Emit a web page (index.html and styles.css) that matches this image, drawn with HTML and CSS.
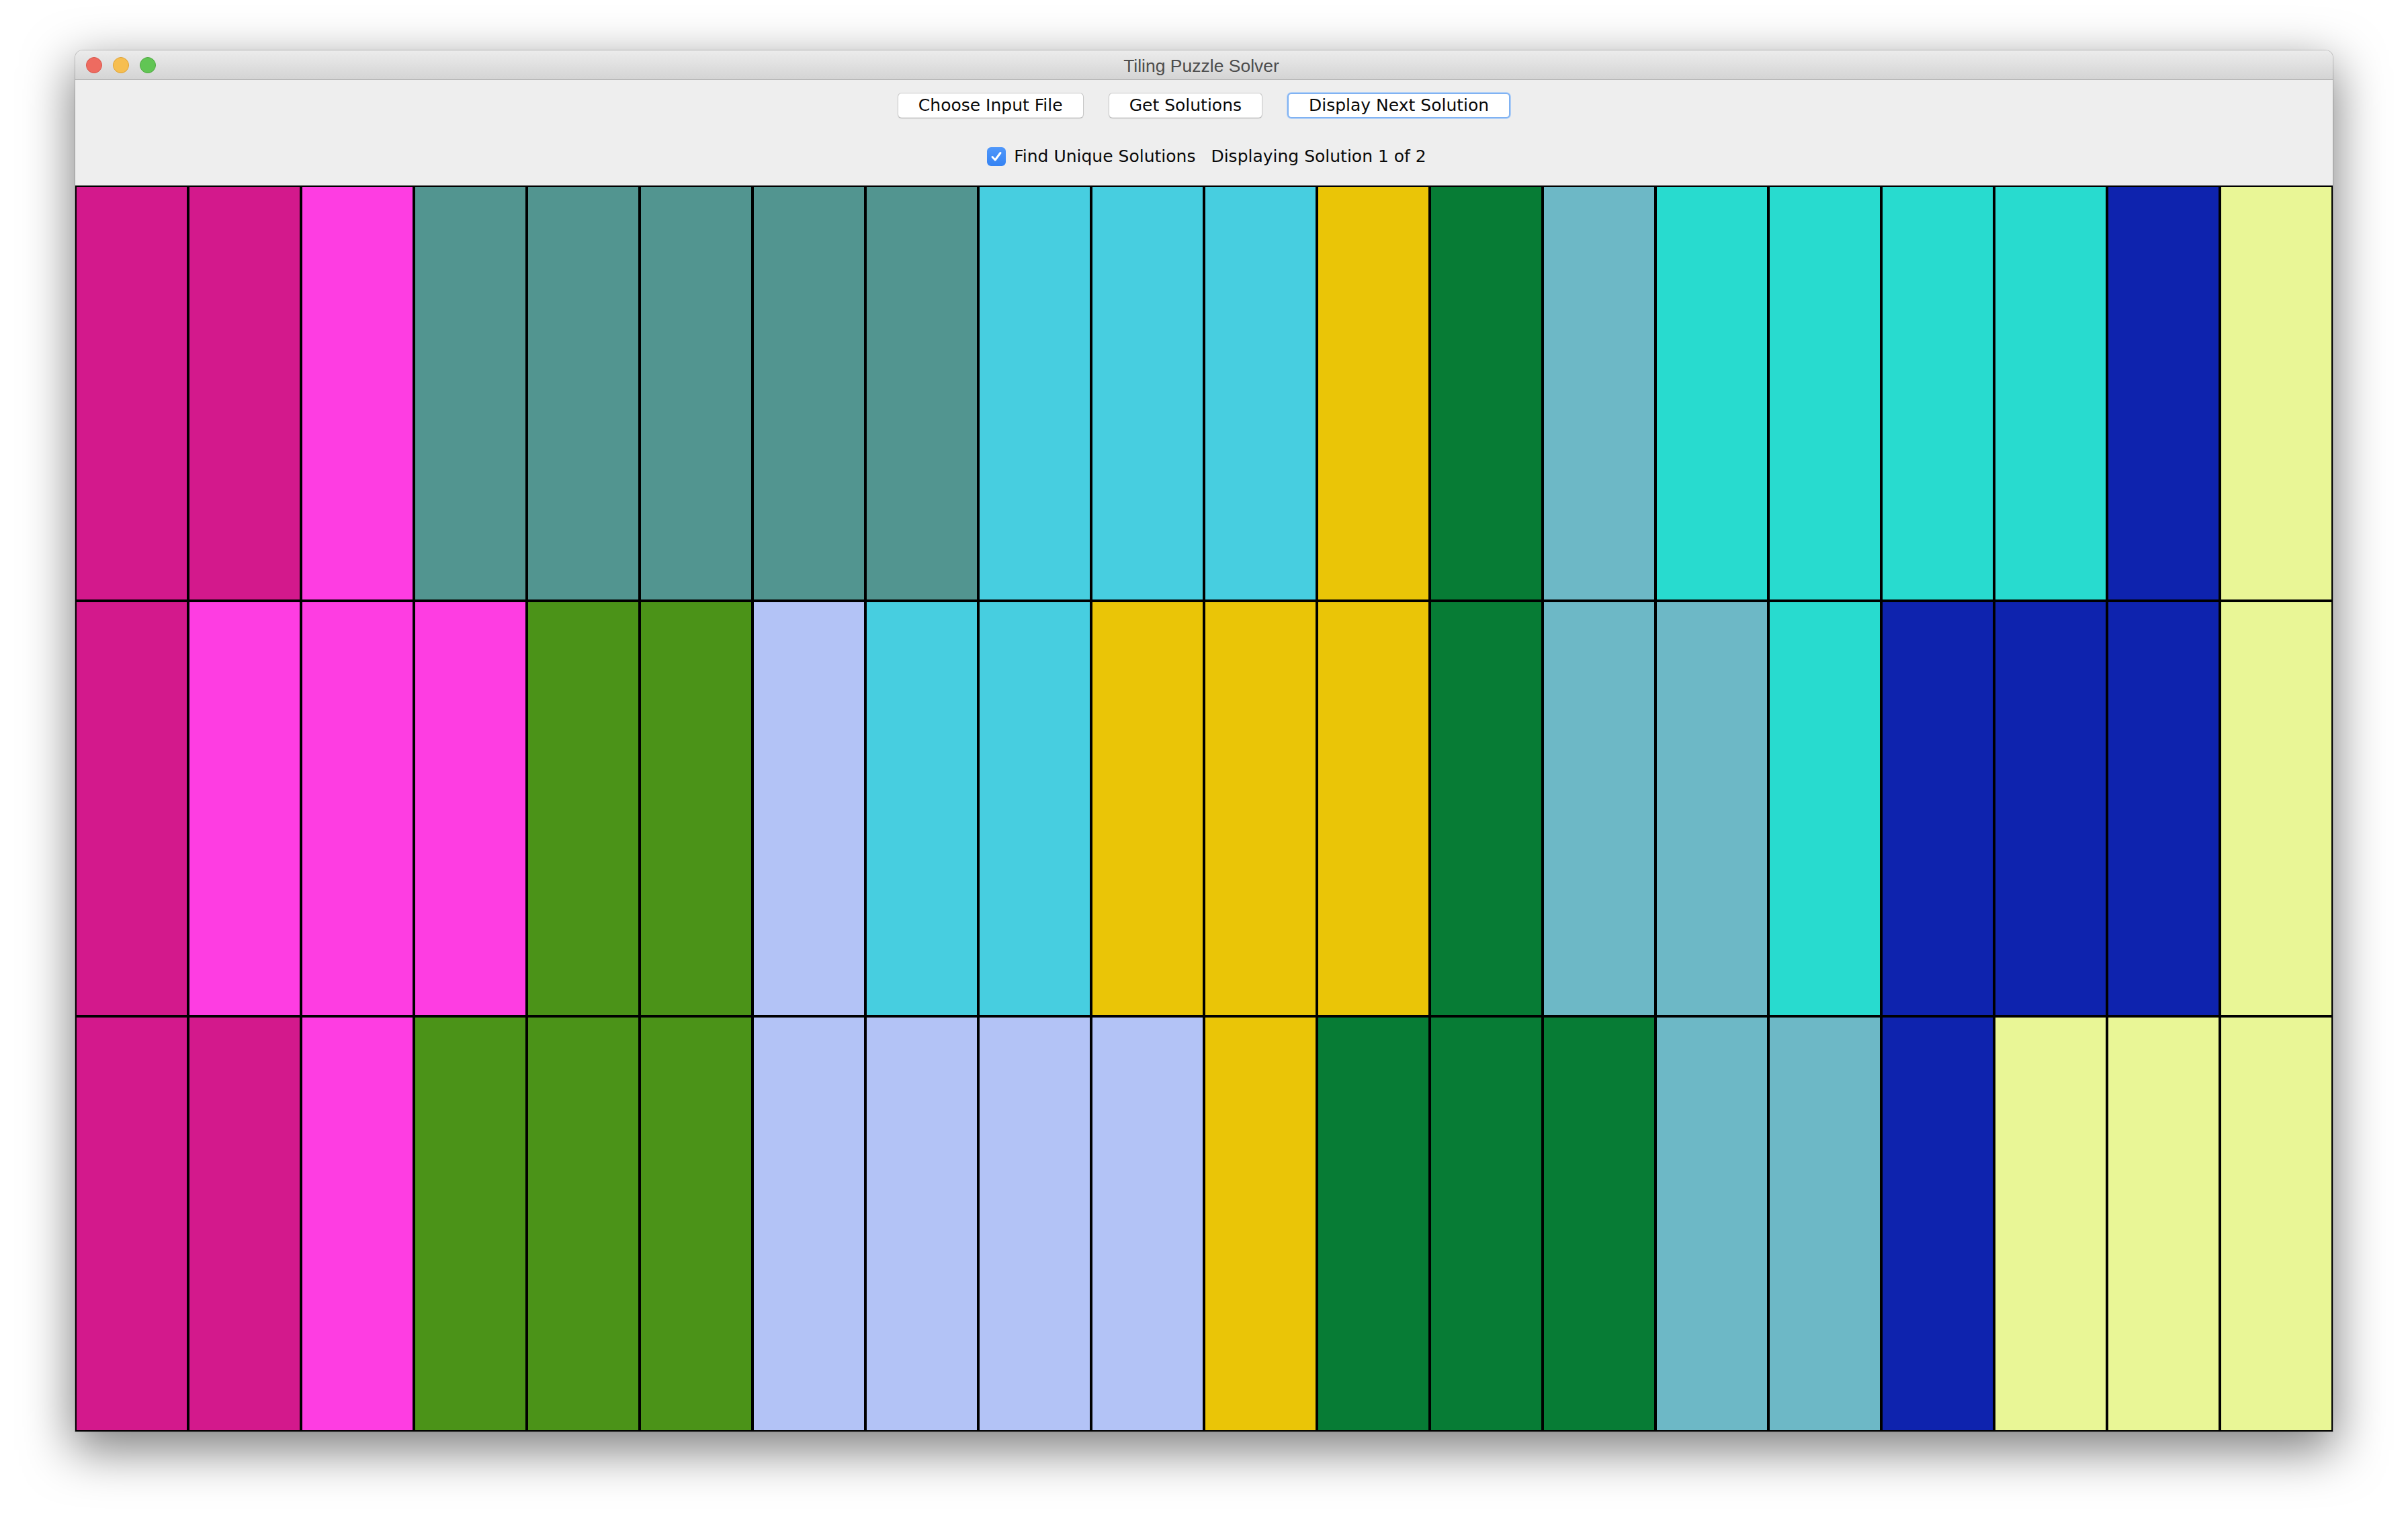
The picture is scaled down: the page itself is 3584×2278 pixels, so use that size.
FILE: index.html
```html
<!DOCTYPE html>
<html lang="en">
<head>
<meta charset="utf-8">
<title>Tiling Puzzle Solver</title>
<link rel="stylesheet" href="styles.css">
</head>
<body>
<div class="window">
  <div class="titlebar">
    <div class="lights">
      <span class="light red"></span>
      <span class="light yellow"></span>
      <span class="light green"></span>
    </div>
    <div class="title">Tiling Puzzle Solver</div>
  </div>
  <div class="controls">
    <div class="buttons">
      <button class="btn">Choose Input File</button>
      <button class="btn">Get Solutions</button>
      <button class="btn focused">Display Next Solution</button>
    </div>
    <div class="options">
      <label class="check">
        <span class="box"><svg viewBox="0 0 28 28" width="28" height="28"><path d="M8 14.5 L12.2 19 L20 8.5" fill="none" stroke="#fff" stroke-width="3" stroke-linecap="round" stroke-linejoin="round"/></svg></span>
        <span class="label">Find Unique Solutions</span>
      </label>
      <span class="status">Displaying Solution 1 of 2</span>
    </div>
  </div>
  <div class="board">
    <div class="cell m"></div><div class="cell m"></div><div class="cell p"></div><div class="cell t"></div><div class="cell t"></div><div class="cell t"></div><div class="cell t"></div><div class="cell t"></div><div class="cell c"></div><div class="cell c"></div><div class="cell c"></div><div class="cell y"></div><div class="cell g"></div><div class="cell lb"></div><div class="cell tq"></div><div class="cell tq"></div><div class="cell tq"></div><div class="cell tq"></div><div class="cell n"></div><div class="cell ly"></div>
    <div class="cell m"></div><div class="cell p"></div><div class="cell p"></div><div class="cell p"></div><div class="cell og"></div><div class="cell og"></div><div class="cell lav"></div><div class="cell c"></div><div class="cell c"></div><div class="cell y"></div><div class="cell y"></div><div class="cell y"></div><div class="cell g"></div><div class="cell lb"></div><div class="cell lb"></div><div class="cell tq"></div><div class="cell n"></div><div class="cell n"></div><div class="cell n"></div><div class="cell ly"></div>
    <div class="cell m"></div><div class="cell m"></div><div class="cell p"></div><div class="cell og"></div><div class="cell og"></div><div class="cell og"></div><div class="cell lav"></div><div class="cell lav"></div><div class="cell lav"></div><div class="cell lav"></div><div class="cell y"></div><div class="cell g"></div><div class="cell g"></div><div class="cell g"></div><div class="cell lb"></div><div class="cell lb"></div><div class="cell n"></div><div class="cell ly"></div><div class="cell ly"></div><div class="cell ly"></div>
  </div>
</div>
</body>
</html>
```
FILE: styles.css
```css
html, body {
  margin: 0;
  padding: 0;
  background: #ffffff;
  overflow: hidden;
}
body {
  width: 3584px;
  height: 2278px;
  padding: 75px 0 0 112px;
  box-sizing: border-box;
}
.window {
  width: 3360px;
  background: #eeeeee;
  border-radius: 11px 11px 0 0;
  box-shadow: 0 24px 72px 4px rgba(0,0,0,0.5), 0 0 0 1px rgba(0,0,0,0.18);
  display: flex;
  flex-direction: column;
}
.titlebar {
  height: 43px;
  border-bottom: 1px solid #b3b3b3;
  background: linear-gradient(#ececec, #d4d4d4);
  border-radius: 11px 11px 0 0;
  display: flex;
  align-items: center;
}
.lights {
  display: flex;
  gap: 16px;
  padding-left: 16px;
}
.light {
  width: 22px;
  height: 22px;
  border-radius: 50%;
  border: 1px solid;
}
.red { background: #ee6b60; border-color: #d8564b; }
.yellow { background: #f6be50; border-color: #dea236; }
.green { background: #61c554; border-color: #4fa941; }
.title {
  flex: 1;
  text-align: center;
  margin-left: -128px;
  padding-top: 3px;
  font-family: "Liberation Sans", Arial, sans-serif;
  font-size: 26.5px;
  color: #4d4d4d;
}
.controls {
  height: 157px;
  display: flex;
  flex-direction: column;
  align-items: center;
  font-family: "DejaVu Sans", sans-serif;
  font-size: 25px;
  color: #0a0a0a;
}
.buttons {
  display: flex;
  gap: 37px;
  margin-top: 19px;
}
.btn {
  height: 38px;
  padding: 0 30px;
  background: #ffffff;
  border: 1px solid #c6c6c6;
  border-bottom-color: #b0b0b0;
  border-radius: 6px;
  font-family: "DejaVu Sans", sans-serif;
  font-size: 25px;
  color: #0a0a0a;
  box-shadow: 0 1px 1px rgba(0,0,0,0.08);
  line-height: 36px;
}
.btn.focused {
  border: 2px solid #80b2f2;
  box-shadow: 0 0 0 1px #b9d4f7;
  line-height: 34px;
}
.options {
  display: flex;
  align-items: center;
  margin-top: 42px;
  margin-left: 8px;
}
.check {
  display: flex;
  align-items: center;
  gap: 12px;
}
.box {
  width: 28px;
  height: 28px;
  border-radius: 6px;
  background: linear-gradient(#4f97fa, #3583f3);
  display: block;
}
.box svg { display: block; }
.status {
  margin-left: 23px;
}
.board {
  height: 1854px;
  background: #000;
  padding: 2px;
  box-sizing: border-box;
  display: grid;
  grid-template-columns: repeat(20, 1fr);
  grid-template-rows: repeat(3, 1fr);
  gap: 4px;
}
.m { background: #d3198c; }
.p { background: #fe3de2; }
.t { background: #529590; }
.c { background: #47cee0; }
.y { background: #eac507; }
.g { background: #077c35; }
.lb { background: #6db8c6; }
.tq { background: #28dbcf; }
.n { background: #0e23ae; }
.ly { background: #e9f696; }
.og { background: #4b9318; }
.lav { background: #b3c3f6; }
```
